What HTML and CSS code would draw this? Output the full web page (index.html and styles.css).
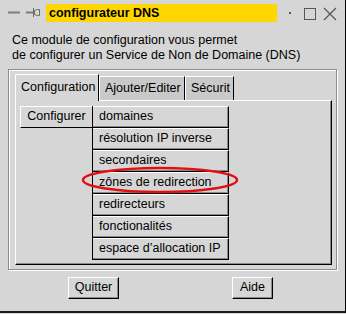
FILE: index.html
```html
<!DOCTYPE html>
<html>
<head>
<meta charset="utf-8">
<title>configurateur DNS</title>
<link rel="stylesheet" href="styles.css">
</head>
<body>
<div class="window">
  <div class="titlebar">
    <svg class="tb-left" width="46" height="28" viewBox="0 0 46 28">
      <line x1="8" y1="12.5" x2="20" y2="12.5" stroke="#7c7c7c" stroke-width="2"/>
      <line x1="26" y1="12.5" x2="33" y2="12.5" stroke="#7c7c7c" stroke-width="2"/>
      <line x1="33.5" y1="8" x2="33.5" y2="17" stroke="#6a6a6a" stroke-width="1"/>
      <path d="M34.5 10.5 L37.5 9.5 L39.5 9.5 L39.5 15.5 L37.5 15.5 L34.5 14.5 Z" fill="none" stroke="#6a6a6a" stroke-width="1"/>
    </svg>
    <div class="title">configurateur DNS</div>
    <svg class="tb-right" width="68" height="28" viewBox="0 0 68 28">
      <rect x="12" y="12" width="2" height="2" fill="#555"/>
      <rect x="27.5" y="8.5" width="11" height="11" fill="none" stroke="#555" stroke-width="1"/>
      <path d="M47 8 L59 20 M59 8 L47 20" stroke="#555" stroke-width="1.2"/>
    </svg>
  </div>

  <p class="intro">Ce module de configuration vous permet<br>de configurer un Service de Non de Domaine (DNS)</p>

  <div class="groove">
    <div class="tabs">
      <div class="tab tab--active">Configuration</div>
      <div class="tab">Ajouter/Editer</div>
      <div class="tab tab--short">Sécurit</div>
    </div>
    <div class="panel">
      <div class="menu-row">
        <div class="menubutton">Configurer</div>
        <div class="menu">
          <div class="menu__item">domaines</div>
          <div class="menu__item">résolution IP inverse</div>
          <div class="menu__item">secondaires</div>
          <div class="menu__item">zônes de redirection</div>
          <div class="menu__item">redirecteurs</div>
          <div class="menu__item">fonctionalités</div>
          <div class="menu__item">espace d’allocation IP</div>
        </div>
      </div>
    </div>
  </div>

  <div class="footer">
    <div class="btn btn--quit">Quitter</div>
    <div class="btn btn--help">Aide</div>
  </div>

  <svg class="highlight" width="158" height="28" viewBox="0 0 158 28">
    <ellipse cx="79" cy="14" rx="77" ry="12" fill="none" stroke="#e01010" stroke-width="2.5"/>
  </svg>
</div>
</body>
</html>
```

FILE: styles.css
```css
* {
  box-sizing: border-box;
}

body {
  margin: 0;
  background: #d6d6d6;
  font-family: "Liberation Sans", Arial, sans-serif;
  font-size: 12.5px;
  color: #000;
}

.window {
  position: relative;
  width: 346px;
  height: 313px;
  background: #d6d6d6;
  border-right: 1px solid #000;
  border-bottom: 2px solid #1a1a1a;
}

/* title bar */
.titlebar {
  display: flex;
  align-items: flex-start;
  height: 28px;
}

.tb-left,
.tb-right {
  display: block;
  flex: none;
}

.title {
  width: 232px;
  height: 18px;
  margin-top: 4px;
  padding-left: 3px;
  background: #ffd700;
  font-weight: bold;
  line-height: 18px;
}

.intro {
  margin: 5px 0 0;
  padding-left: 12px;
  line-height: 15px;
}

/* etched frame */
.groove {
  width: 329px;
  height: 201px;
  margin: 6px 0 0 8px;
  padding: 4px 3px 3px 6px;
  border: 1px solid #8c8c8c;
  box-shadow: inset 1px 1px 0 #fff, 1px 1px 0 #fff;
}

.tabs {
  display: flex;
  align-items: flex-end;
  height: 26px;
  position: relative;
  z-index: 1;
}

.tab {
  height: 24px;
  padding: 4px 0 0 5px;
  background: #c9c9c9;
  border-top: 1px solid #fff;
  border-left: 1px solid #fff;
  border-right: 1px solid #000;
  line-height: 15px;
  width: 86px;
}

.tab--active {
  height: 27px;
  width: 84px;
  margin-bottom: -1px;
  padding-top: 5px;
  background: #d6d6d6;
}

.tab--short {
  width: 49px;
}

.panel {
  width: 317px;
  height: 165px;
  padding: 5px 0 0 4px;
  border-top: 1px solid #fff;
  border-left: 1px solid #fff;
  border-right: 1px solid #000;
  border-bottom: 1px solid #000;
  box-shadow: inset -1px -1px 0 #8a8a8a;
}

.menu-row {
  display: flex;
  align-items: flex-start;
}

.menubutton {
  width: 72px;
  height: 22px;
  text-align: center;
  line-height: 19px;
  border-top: 1px solid #fff;
  border-left: 1px solid #fff;
  border-bottom: 1px solid #000;
}

.menu {
  width: 137px;
  border-left: 1px solid #000;
}

.menu__item {
  height: 22px;
  padding-left: 6px;
  line-height: 19px;
  border-top: 1px solid #fff;
  border-right: 1px solid #000;
  border-bottom: 1px solid #000;
  box-shadow: inset -1px -1px 0 #8a8a8a;
}

/* bottom buttons */
.footer {
  display: flex;
  margin-top: 7px;
  padding-left: 68px;
}

.btn {
  height: 22px;
  text-align: center;
  line-height: 19px;
  border-top: 1px solid #fff;
  border-left: 1px solid #fff;
  border-right: 1px solid #000;
  border-bottom: 1px solid #000;
  box-shadow: inset -1px -1px 0 #8a8a8a;
}

.btn--quit {
  width: 51px;
}

.btn--help {
  width: 41px;
  margin-left: 113px;
}

.highlight {
  position: absolute;
  left: 81px;
  top: 166px;
}
```
